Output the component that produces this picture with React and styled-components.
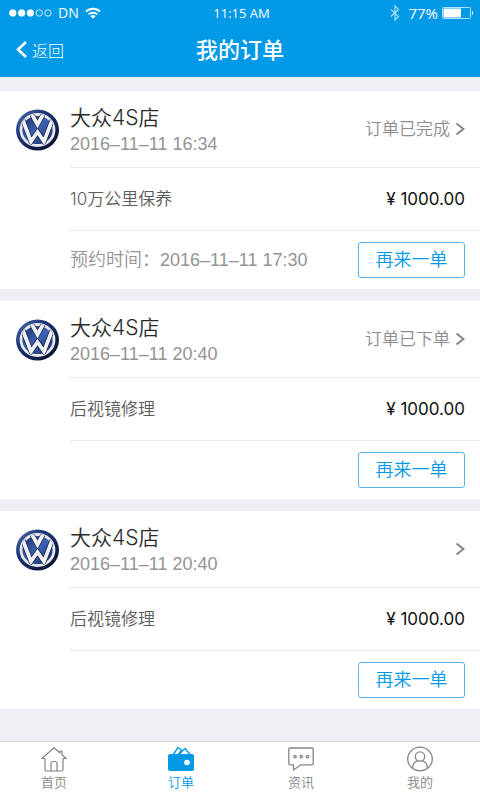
import styled, { createGlobalStyle } from "styled-components";

const GlobalStyle = createGlobalStyle`
    * {
        box-sizing: border-box;
    }

    body {
        margin: 0;
        background: #f0eff5;
        font-family: Inter, "Noto Sans CJK SC", sans-serif;
        color: #2b2b2b;
    }

    button {
        font-family: inherit;
    }
`;

const Page = styled.div`
    display: flex;
    flex-direction: column;
    min-height: 100vh;
`;

const TopBar = styled.header`
    background: #0299e6;
    color: #fff;
`;

const StatusBar = styled.div`
    display: grid;
    grid-template-columns: 1fr auto 1fr;
    align-items: center;
    height: 26px;
    padding: 0 6px 0 9px;
    font-family: "Open Sans", sans-serif;
    font-size: 13px;
    line-height: 26px;
`;

const Signal = styled.div`
    display: flex;
    align-items: center;
    gap: 6px;
    font-size: 14px;
`;

const Battery = styled.div`
    display: flex;
    align-items: center;
    justify-content: flex-end;
    gap: 4px;
    font-size: 15px;

    svg:first-child {
        margin-right: 4px;
    }
`;

const NavBar = styled.div`
    display: grid;
    grid-template-columns: 1fr auto 1fr;
    align-items: center;
    height: 51px;
    padding: 0 16px 4px;
`;

const BackLink = styled.a`
    display: flex;
    align-items: center;
    gap: 5px;
    color: #fff;
    font-size: 16px;
    font-weight: 300;
    text-decoration: none;
`;

const PageTitle = styled.h1`
    margin: 0;
    font-size: 22px;
    font-weight: 500;
    line-height: 32px;
`;

const OrderList = styled.main`
    display: flex;
    flex: 1;
    flex-direction: column;
    gap: 12px;
    padding: 14px 0 32px;
`;

const Card = styled.article`
    display: grid;
    grid-template-columns: 54px 1fr;
    padding-left: 16px;
    background: #fff;
`;

const Logo = styled.svg`
    width: 43px;
    height: 42px;
    margin-top: 18px;
`;

const CardBody = styled.div`
    min-width: 0;
`;

const CardRow = styled.div`
    display: flex;
    align-items: center;
    justify-content: space-between;
    min-height: ${({ $height }) => $height}px;
    padding-right: 15px;
    border-bottom: ${({ $last }) => ($last ? "none" : "1px solid #e9e9eb")};
`;

const ShopInfo = styled.div`
    padding-top: 4px;
`;

const ShopName = styled.h2`
    margin: 0;
    font-size: 21px;
    font-weight: 350;
    line-height: 26px;
`;

const Muted = styled.div`
    color: #949494;
    font-family: "Liberation Sans", "Noto Sans CJK SC", sans-serif;
    font-size: 18px;
    font-weight: 350;
    line-height: 26px;
`;

const Status = styled.a`
    display: flex;
    align-items: center;
    gap: 5px;
    color: #8c8c8c;
    font-size: 17px;
    font-weight: 350;
    line-height: 26px;
    text-decoration: none;
`;

const Service = styled.span`
    color: #5c5c5c;
    font-size: 17px;
    font-weight: 350;
    line-height: 26px;
`;

const Price = styled.span`
    color: #111;
    font-size: 17px;
    line-height: 26px;
`;

const AgainButton = styled.button`
    width: 107px;
    height: 36px;
    margin-left: auto;
    padding: 0;
    border: 1px solid #55b5ec;
    border-radius: 3px;
    background: #fff;
    color: #0299e6;
    font-size: 18px;
    font-weight: 350;
    line-height: 26px;
    cursor: pointer;
`;

const TabBar = styled.nav`
    position: sticky;
    bottom: 0;
    display: grid;
    grid-template-columns: 127fr 120fr 119fr 40px;
    height: 60px;
    padding: 4px 40px 0 34px;
    border-top: 1px solid #dcdbe3;
    background: #fff;
`;

const Tab = styled.a`
    display: flex;
    flex-direction: column;
    align-items: center;
    gap: 1px;
    width: 40px;
    color: ${({ $active }) => ($active ? "#0299e6" : "#858585")};
    font-size: 13px;
    font-weight: 350;
    line-height: 18px;
    text-decoration: none;
`;

const orders = [
    { id: 1, shop: "大众4S店", date: "2016–11–11 16:34", status: "订单已完成", service: "10万公里保养", price: "1000.00", booked: "2016–11–11 17:30" },
    { id: 2, shop: "大众4S店", date: "2016–11–11 20:40", status: "订单已下单", service: "后视镜修理", price: "1000.00" },
    { id: 3, shop: "大众4S店", date: "2016–11–11 20:40", status: "", service: "后视镜修理", price: "1000.00" },
];

const CarLogo = () => (
    <Logo viewBox="0 0 43 42" role="img" aria-label="大众">
        <defs>
            <linearGradient id="rim" x1="0" y1="0" x2="1" y2="1">
                <stop offset="0" stopColor="#5670b4" />
                <stop offset="0.35" stopColor="#1d3478" />
                <stop offset="1" stopColor="#060b20" />
            </linearGradient>
            <linearGradient id="face" x1="0" y1="0" x2="1" y2="1">
                <stop offset="0" stopColor="#16295f" />
                <stop offset="0.5" stopColor="#3c62b4" />
                <stop offset="1" stopColor="#101d4b" />
            </linearGradient>
            <clipPath id="disc">
                <ellipse cx="21.5" cy="21" rx="17" ry="16" />
            </clipPath>
        </defs>
        <ellipse cx="21.5" cy="21" rx="21.5" ry="20.5" fill="url(#rim)" />
        <ellipse cx="21.5" cy="21" rx="16.5" ry="15.5" fill="url(#face)" stroke="#e6e8ee" strokeWidth="2.8" />
        <g clipPath="url(#disc)" fill="none" strokeLinejoin="miter">
            <path d="M14.5 3 21.5 15.5 28.5 3" stroke="#0d1a45" strokeWidth="5" />
            <path d="M6 9 15 32.5 21.5 23 28 32.5 37 9" stroke="#0d1a45" strokeWidth="5" />
            <path d="M14.5 3 21.5 15.5 28.5 3" stroke="#eef0f4" strokeWidth="3.8" />
            <path d="M6 9 15 32.5 21.5 23 28 32.5 37 9" stroke="#eef0f4" strokeWidth="3.8" />
        </g>
    </Logo>
);

const Chevron = () => (
    <svg width="10" height="14" viewBox="0 0 10 14" fill="none" stroke="#858585" strokeWidth="2" aria-hidden="true">
        <path d="M1.5 1.5 8.5 7 1.5 12.5" />
    </svg>
);

const Order = ({ order }) => (
    <Card>
        <CarLogo />
        <CardBody>
            <CardRow $height={77}>
                <ShopInfo>
                    <ShopName>{order.shop}</ShopName>
                    <Muted>{order.date}</Muted>
                </ShopInfo>
                <Status href="#detail" aria-label={order.status || "订单详情"}>
                    {order.status}
                    <Chevron />
                </Status>
            </CardRow>
            <CardRow $height={63}>
                <Service>{order.service}</Service>
                <Price>¥ {order.price}</Price>
            </CardRow>
            <CardRow $height={58} $last>
                {order.booked && <Muted>预约时间：{order.booked}</Muted>}
                <AgainButton type="button">再来一单</AgainButton>
            </CardRow>
        </CardBody>
    </Card>
);

const HomeIcon = () => (
    <svg width="28" height="26" viewBox="0 0 28 26" fill="none" stroke="currentColor" strokeWidth="1.2" strokeLinejoin="round" strokeLinecap="round">
        <path d="M5 12.5H1.8L14 1.8l6 5.2V5h2v3.8L26.200 12.500H23V23.500a1.500 1.500 0 0 1-1.500 1.500h-15A1.500 1.500 0 0 1 5 23.500Z" />
        <path d="M11 25v-7.500a2 2 0 0 1 2-2h2a2 2 0 0 1 2 2V25" />
    </svg>
);

const WalletIcon = () => (
    <svg width="28" height="26" viewBox="0 0 28 26">
        <g fill="none" stroke="currentColor" strokeWidth="1.4" strokeLinejoin="round">
            <path d="M6 9 11 1.5 14.5 4 11 9" />
            <path d="M12 8.5 18 2.5l5 6" />
        </g>
        <rect x="1" y="8" width="26" height="17" rx="2" fill="currentColor" />
        <circle cx="20" cy="16.5" r="2.8" fill="#fff" />
    </svg>
);

const NewsIcon = () => (
    <svg width="28" height="26" viewBox="0 0 28 26" fill="none" stroke="currentColor" strokeWidth="1.3" strokeLinejoin="round">
        <path d="M3 2H25a1.2 1.2 0 0 1 1.2 1.2V17.6A1.2 1.2 0 0 1 25 18.8H14L6.5 24V18.8H3A1.2 1.2 0 0 1 1.8 17.6V3.2A1.2 1.2 0 0 1 3 2Z" />
        <circle cx="8" cy="10.6" r="1.2" />
        <circle cx="14.2" cy="10.6" r="1.2" />
        <circle cx="20.5" cy="10.6" r="1.2" />
    </svg>
);

const MineIcon = () => (
    <svg width="28" height="26" viewBox="0 0 28 26" fill="none" stroke="currentColor" strokeWidth="1.3">
        <ellipse cx="14" cy="13" rx="12.3" ry="11.8" />
        <circle cx="14" cy="10.5" r="4.7" />
        <path d="M6.5 22.2c.4-4 2.6-7 5.4-7.4M21.5 22.2c-.4-4-2.6-7-5.4-7.4" />
    </svg>
);

const tabs = [
    { label: "首页", icon: HomeIcon },
    { label: "订单", icon: WalletIcon, active: true },
    { label: "资讯", icon: NewsIcon },
    { label: "我的", icon: MineIcon },
];

export default function App() {
    return (
        <Page>
            <GlobalStyle />
            <TopBar>
                <StatusBar>
                    <Signal>
                        <svg width="43" height="8" viewBox="0 0 43 8" fill="#fff" stroke="#fff" strokeWidth="0.8">
                            <circle cx="3.8" cy="4" r="3.3" />
                            <circle cx="12.6" cy="4" r="3.3" />
                            <circle cx="21.4" cy="4" r="3.3" />
                            <circle cx="30.2" cy="4" r="3.2" fill="none" />
                            <circle cx="39" cy="4" r="3.2" fill="none" />
                        </svg>
                        <span>DN</span>
                        <svg width="16" height="12" viewBox="0 0 16 12" fill="none" stroke="#fff" strokeWidth="2">
                            <path d="M1 4.5a10 10 0 0 1 14 0M3.7 7.4a6.2 6.2 0 0 1 8.6 0" />
                            <path d="M8 11.8 5.5 9.3a3.6 3.6 0 0 1 5 0Z" fill="#fff" stroke="none" />
                        </svg>
                    </Signal>
                    <span>11:15 AM</span>
                    <Battery>
                        <svg width="10" height="16" viewBox="0 0 10 16" fill="none" stroke="#b5e0f8" strokeWidth="1.1">
                            <path d="M1 4.5 8.5 11.5 5 15V1L8.5 4.5 1 11.5" />
                        </svg>
                        <span>77%</span>
                        <svg width="32" height="12" viewBox="0 0 32 12">
                            <rect x="0.5" y="0.5" width="28" height="11" rx="1" fill="none" stroke="#b5e0f8" />
                            <rect x="1.5" y="1.5" width="17.5" height="9" fill="#fff" />
                            <path d="M30 4v4c1.6-.6 1.6-3.4 0-4Z" fill="#fff" />
                        </svg>
                    </Battery>
                </StatusBar>
                <NavBar>
                    <BackLink href="#back">
                        <svg width="11" height="17" viewBox="0 0 11 17" fill="none" stroke="#fff" strokeWidth="2.6">
                            <path d="M10 1 2 8.5l8 7.5" />
                        </svg>
                        返回
                    </BackLink>
                    <PageTitle>我的订单</PageTitle>
                </NavBar>
            </TopBar>

            <OrderList>
                {orders.map((order) => (
                    <Order key={order.id} order={order} />
                ))}
            </OrderList>

            <TabBar>
                {tabs.map(({ label, icon: Icon, active }) => (
                    <Tab key={label} href="#tab" $active={active}>
                        <Icon />
                        {label}
                    </Tab>
                ))}
            </TabBar>
        </Page>
    );
}
